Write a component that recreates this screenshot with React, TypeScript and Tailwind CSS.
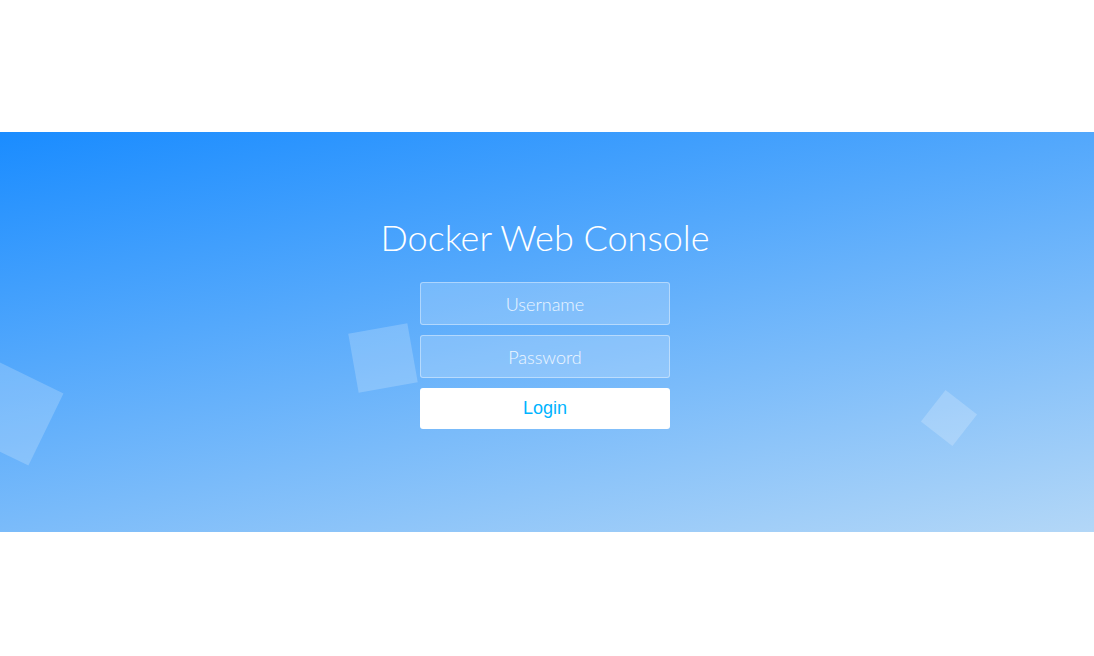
import React from "react";

const App = () => {
  return (
    <div className="min-h-[656px] bg-white pt-[132px] font-['Lato',sans-serif]">
      <section className="relative h-[400px] overflow-hidden bg-[linear-gradient(168deg,#1a8cff_0%,#b3d7f7_100%)]">
        {/* floating squares */}
        <div className="absolute left-[-30px] top-[240px] h-[80px] w-[80px] rotate-[26deg] bg-white/20" />
        <div className="absolute left-[353px] top-[196px] h-[60px] w-[60px] rotate-[-10deg] bg-white/20" />
        <div className="absolute left-[929px] top-[266px] h-[40px] w-[40px] rotate-[38deg] bg-white/20" />

        <div className="relative mx-auto max-w-[600px] pr-[4px] pt-[80px] text-center">
          <h1 className="text-[36px] leading-[50px] font-light text-white">Docker Web Console</h1>
          <form className="flex flex-col items-center gap-[10px] pt-[20px]">
            <input
              type="text"
              placeholder="Username"
              className="w-[250px] rounded-[3px] border border-white/40 bg-white/20 px-[15px] pt-[11px] pb-[9px] text-center text-[18px] leading-[21px] font-light text-white placeholder:text-white/85 outline-none"
            />
            <input
              type="password"
              placeholder="Password"
              className="w-[250px] rounded-[3px] border border-white/40 bg-white/20 px-[15px] pt-[11px] pb-[9px] text-center text-[18px] leading-[21px] font-light text-white placeholder:text-white/85 outline-none"
            />
            <button
              type="button"
              className="w-[250px] rounded-[3px] bg-white px-[15px] py-[10px] text-[18px] leading-[21px] text-[#00b4ff] font-['Liberation_Sans',Arial,sans-serif]"
            >
              Login
            </button>
          </form>
        </div>
      </section>
    </div>
  );
};

export default App;
